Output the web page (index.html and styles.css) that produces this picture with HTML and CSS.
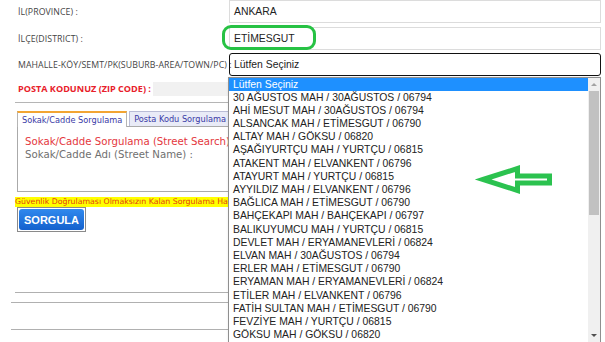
FILE: index.html
```html
<!DOCTYPE html>
<html lang="tr">
<head>
  <meta charset="UTF-8">
  <meta name="viewport" content="width=device-width, initial-scale=1.0">
  <title>Posta Kodu Sorgulama</title>
  <link rel="stylesheet" href="styles.css">
</head>
<body>

  <div class="page">

    <div class="form-row">
      <div class="label">İL(PROVINCE) :</div>
      <div class="field"><div class="input">ANKARA</div></div>
    </div>

    <div class="form-row second">
      <div class="label">İLÇE(DISTRICT) :</div>
      <div class="field">
        <div class="input">ETİMESGUT</div>
        <div class="mark"></div>
      </div>
    </div>

    <div class="form-row third">
      <div class="label">MAHALLE-KÖY/SEMT/PK(SUBURB-AREA/TOWN/PC) :</div>
      <div class="field">
        <div class="select">Lütfen Seçiniz</div>
        <div class="dropdown">
          <ul class="options">
            <li class="selected">Lütfen Seçiniz</li>
            <li>30 AĞUSTOS MAH / 30AĞUSTOS / 06794</li>
            <li>AHİ MESUT MAH / 30AĞUSTOS / 06794</li>
            <li>ALSANCAK MAH / ETİMESGUT / 06790</li>
            <li>ALTAY MAH / GÖKSU / 06820</li>
            <li>AŞAĞIYURTÇU MAH / YURTÇU / 06815</li>
            <li>ATAKENT MAH / ELVANKENT / 06796</li>
            <li>ATAYURT MAH / YURTÇU / 06815</li>
            <li>AYYILDIZ MAH / ELVANKENT / 06796</li>
            <li>BAĞLICA MAH / ETİMESGUT / 06790</li>
            <li>BAHÇEKAPI MAH / BAHÇEKAPI / 06797</li>
            <li>BALIKUYUMCU MAH / YURTÇU / 06815</li>
            <li>DEVLET MAH / ERYAMANEVLERİ / 06824</li>
            <li>ELVAN MAH / 30AĞUSTOS / 06794</li>
            <li>ERLER MAH / ETİMESGUT / 06790</li>
            <li>ERYAMAN MAH / ERYAMANEVLERİ / 06824</li>
            <li>ETİLER MAH / ELVANKENT / 06796</li>
            <li>FATİH SULTAN MAH / ETİMESGUT / 06790</li>
            <li>FEVZİYE MAH / YURTÇU / 06815</li>
            <li>GÖKSU MAH / GÖKSU / 06820</li>
          </ul>
          <div class="scrollbar">
            <div class="scroll-btn up"></div>
            <div class="thumb"></div>
            <div class="scroll-btn down"></div>
          </div>
        </div>
      </div>
    </div>

    <div class="zip-row">
      <span class="zip-label">POSTA KODUNUZ (ZIP CODE) :</span>
      <span class="zip-value"></span>
    </div>

    <div class="rule"></div>

    <div class="search">
      <div class="tabs">
        <div class="tab active">Sokak/Cadde Sorgulama</div>
        <div class="tab">Posta Kodu Sorgulama</div>
      </div>
      <div class="tab-panel">
        <p class="panel-title">Sokak/Cadde Sorgulama (Street Search)</p>
        <p class="panel-text">Sokak/Cadde Adı (Street Name) :</p>
      </div>
      <div class="warning">Güvenlik Doğrulaması Olmaksızın Kalan Sorgulama Hakkınız</div>
      <div class="btn-frame"><button class="btn">SORGULA</button></div>
    </div>

    <div class="line line-a"></div>
    <div class="line line-b"></div>
    <div class="line line-c"></div>

    <svg class="arrow" width="90" height="40" viewBox="0 0 90 40">
      <polygon points="13,19.5 47.5,8.5 47.5,16 79.5,16 79.5,23 47.5,23 47.5,30.5"
               fill="#fff" stroke="#2bc24f" stroke-width="5" stroke-linejoin="miter"/>
    </svg>

  </div>

</body>
</html>
```

FILE: styles.css
```css
body {
  margin: 0;
  background: #ffffff;
  font-family: "Liberation Sans", Arial, sans-serif;
  color: #222222;
}

.page {
  position: relative;
  width: 586px;
  height: 342px;
  padding-left: 15px;
  overflow: hidden;
}

.form-row {
  display: grid;
  grid-template-columns: 214px 372px;
  align-items: center;
  height: 23px;
}
.form-row.second {
  margin-top: 4px;
}
.form-row.third {
  margin-top: 3px;
}

.label {
  padding-left: 3px;
  font-family: "Open Sans", sans-serif;
  font-size: 8.75px;
  letter-spacing: 0.08px;
  color: #444444;
  white-space: nowrap;
}

.field {
  position: relative;
  height: 23px;
}

.input {
  box-sizing: border-box;
  height: 23px;
  border: 1px solid #dcdcdc;
  padding-left: 4px;
  font-size: 10.4px;
  line-height: 21px;
  color: #222222;
}

.mark {
  position: absolute;
  left: -7px;
  top: -2px;
  width: 94px;
  height: 25px;
  box-sizing: border-box;
  border: 3.5px solid #27c244;
  border-radius: 9px;
}

.select {
  box-sizing: border-box;
  height: 23px;
  border: 1px solid #111111;
  border-radius: 3px;
  padding-left: 4px;
  font-size: 10.4px;
  line-height: 21px;
}

.dropdown {
  position: absolute;
  left: -1px;
  top: 23.5px;
  width: 373px;
  height: 266px;
  box-sizing: border-box;
  border: 1px solid #8f8f8f;
  background: #ffffff;
  display: flex;
  z-index: 5;
  box-shadow: 1px 1px 3px rgba(0, 0, 0, 0.18);
}

.options {
  flex: 1;
  list-style: none;
  margin: 0;
  padding: 0;
}
.options li {
  height: 13.2px;
  line-height: 13.2px;
  padding-left: 4px;
  font-size: 10.4px;
  color: #222222;
  white-space: nowrap;
}
.options li.selected {
  background: #1e90ff;
  color: #ffffff;
}

.scrollbar {
  width: 12px;
  background: #f0f0f0;
  display: flex;
  flex-direction: column;
}
.scroll-btn {
  height: 13px;
  display: flex;
  align-items: center;
  justify-content: center;
}
.scroll-btn::after {
  content: "";
  border-left: 3px solid transparent;
  border-right: 3px solid transparent;
}
.scroll-btn.up::after {
  border-bottom: 3px solid #a3a3a3;
}
.scroll-btn.down {
  margin-top: auto;
}
.scroll-btn.down::after {
  border-top: 3px solid #505050;
}
.thumb {
  height: 124px;
  margin: 0 1px;
  background: #c1c1c1;
}

.zip-row {
  display: flex;
  align-items: center;
  height: 15px;
  margin-top: 5px;
}
.zip-label {
  padding-left: 3px;
  font-family: "Open Sans", sans-serif;
  font-size: 9.1px;
  font-weight: bold;
  color: #e8202a;
  white-space: nowrap;
}
.zip-value {
  flex: 1;
  height: 14px;
  margin-left: 2px;
  margin-right: 368px;
  background: #f1f1f1;
}

.rule {
  border-top: 1px solid #b5b5b5;
  margin-top: 6px;
}

.search {
  margin-top: 8px;
  margin-left: 2px;
}

.tabs {
  display: flex;
  align-items: flex-end;
}
.tab {
  box-sizing: border-box;
  height: 15px;
  padding: 0 4px;
  border: 1px solid #b9bcd6;
  border-bottom: none;
  background: #e9ebf7;
  font-family: "DejaVu Sans", sans-serif;
  font-size: 8.2px;
  line-height: 14px;
  color: #3a3aa6;
  white-space: nowrap;
  margin-right: 2px;
}
.tab.active {
  height: 16px;
  background: #ffffff;
  border-color: #b5b5b5;
  border-top: 2px solid #f2a533;
  margin-bottom: -1px;
  position: relative;
}

.tab-panel {
  box-sizing: border-box;
  height: 66px;
  border: 1px solid #aaaaaa;
  padding: 8px 7px 0;
  font-family: "DejaVu Sans", sans-serif;
  font-size: 10.2px;
  line-height: 13px;
}
.tab-panel p {
  margin: 0;
  white-space: nowrap;
}
.panel-title {
  color: #e4373d;
}
.panel-text {
  color: #707070;
}

.warning {
  height: 10px;
  margin-top: 5px;
  margin-left: -2px;
  background: #ffff00;
  font-family: "DejaVu Sans", sans-serif;
  font-size: 7.8px;
  line-height: 10px;
  color: #e2400f;
  white-space: nowrap;
}

.btn-frame {
  box-sizing: border-box;
  width: 69px;
  height: 25px;
  border: 1px solid #8a8a8a;
  padding: 1px;
}
.btn {
  width: 100%;
  height: 100%;
  border: none;
  border-radius: 3px;
  background: linear-gradient(#3089ee, #1461cd);
  color: #ffffff;
  font-family: "Liberation Sans", Arial, sans-serif;
  font-size: 11px;
  font-weight: bold;
  padding: 0;
}

.line {
  border-top: 1px solid #b0b0b0;
}
.line-a {
  margin-top: 60px;
}
.line-b {
  margin-top: 9px;
  margin-left: -4px;
}
.line-c {
  margin-top: 26px;
  margin-left: -4px;
}

.arrow {
  position: absolute;
  left: 470px;
  top: 160px;
  z-index: 10;
}
```
